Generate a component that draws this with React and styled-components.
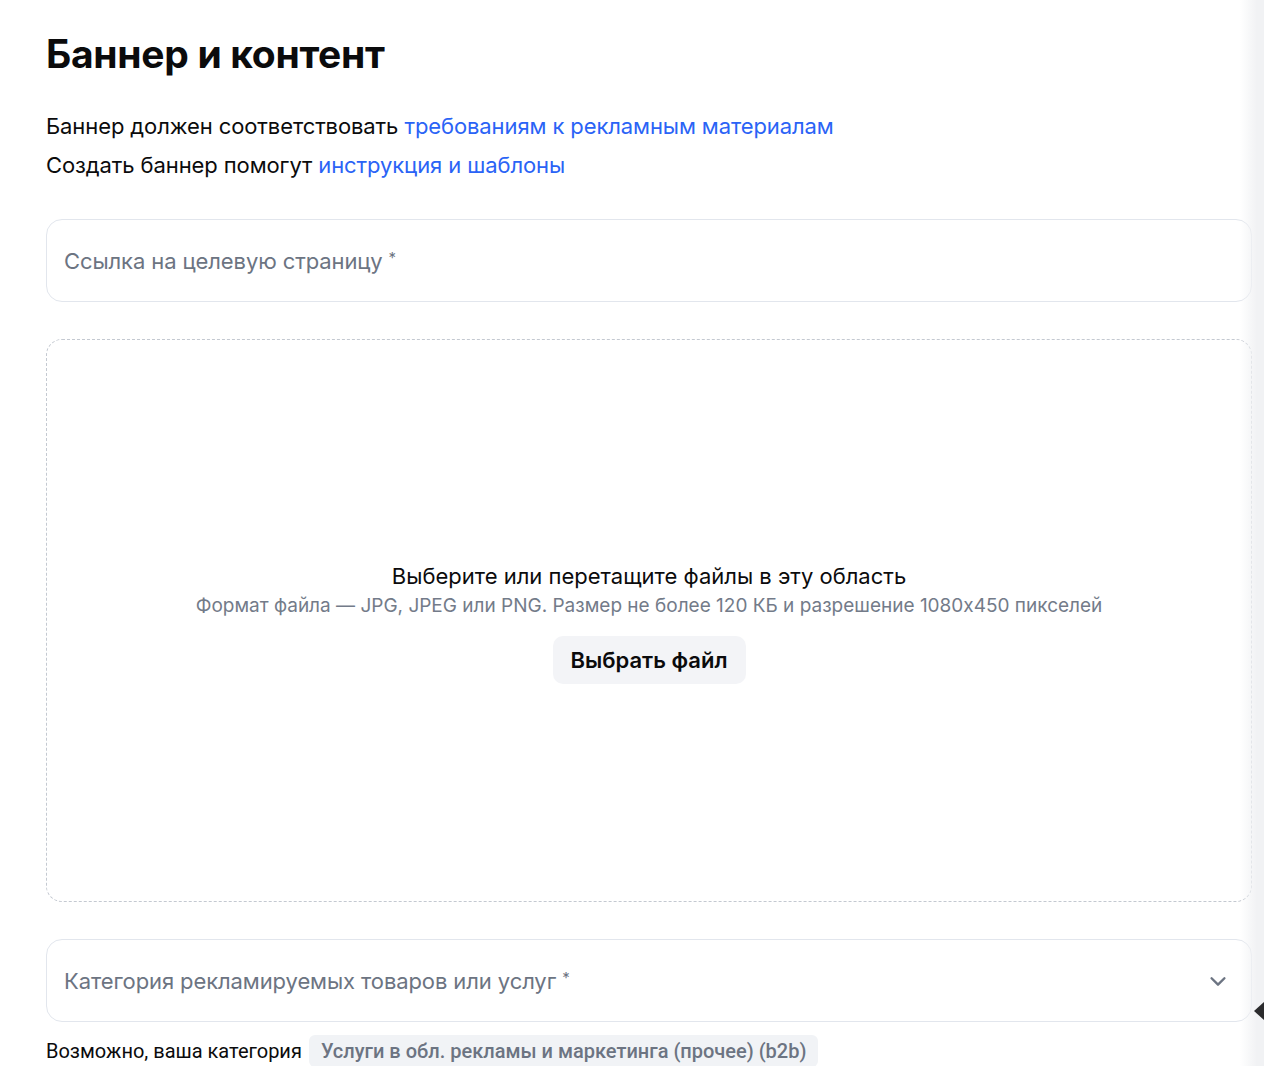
import styled, { createGlobalStyle } from "styled-components";

const GlobalStyle = createGlobalStyle`
  * { box-sizing: border-box; }
  body {
    margin: 0;
    background: #fff;
    font-family: Inter, "Noto Sans", sans-serif;
    color: #0b0b0c;
  }
`;

const Page = styled.div`
  position: relative;
  width: 1264px;
  height: 1066px;
  overflow: hidden;
  padding: 29px 12px 0 46px;
`;

const Title = styled.h1`
  margin: 0 0 28px;
  font-size: 39px;
  line-height: 50px;
  font-weight: 700;
  letter-spacing: -0.3px;
`;

const Note = styled.p`
  margin: 0;
  font-size: 22px;
  line-height: 39px;
  letter-spacing: -0.1px;
  a {
    color: #2a63f6;
    text-decoration: none;
  }
`;

const Field = styled.div`
  display: flex;
  align-items: center;
  justify-content: space-between;
  height: 83px;
  margin-top: ${(p) => p.$top}px;
  padding: 0 22px 0 17px;
  border: 1px solid #e2e6ed;
  border-radius: 16px;
  font-size: 22px;
  color: #6c7482;
  letter-spacing: -0.1px;
`;

const Required = styled.span`
  font-size: 15px;
  vertical-align: top;
  margin-left: 6px;
`;

const Dropzone = styled.div`
  display: flex;
  flex-direction: column;
  align-items: center;
  justify-content: center;
  height: 563px;
  margin-top: 37px;
  padding-top: 5px;
  border: 1px dashed #c4c9d1;
  border-radius: 16px;
  text-align: center;
`;

const DropTitle = styled.div`
  font-size: 22px;
  line-height: 28px;
  color: #0b0b0c;
`;

const DropHint = styled.div`
  margin-top: 3px;
  font-size: 19px;
  line-height: 26px;
  color: #737b89;
`;

const PickButton = styled.button`
  margin-top: 17px;
  height: 48px;
  padding: 0 18px;
  border: none;
  border-radius: 10px;
  background: #f3f4f7;
  font-family: inherit;
  font-size: 22px;
  font-weight: 600;
  color: #0b0b0c;
`;

const Hint = styled.div`
  display: flex;
  align-items: center;
  gap: 7px;
  margin-top: 13px;
  font-family: Roboto, sans-serif;
  font-size: 20px;
  color: #0b0b0c;
`;

const Chip = styled.span`
  display: inline-flex;
  align-items: center;
  height: 32px;
  padding: 0 12px;
  border-radius: 6px;
  background: #f1f3f6;
  font-weight: 500;
  color: #6c7482;
`;

const Shade = styled.div`
  position: absolute;
  top: 0;
  right: 0;
  width: 24px;
  height: 100%;
  background: linear-gradient(to right, rgba(243, 244, 246, 0), #f1f2f4 70%);
  pointer-events: none;
`;

const Pointer = styled.div`
  position: absolute;
  right: 0;
  top: 1002px;
  width: 0;
  height: 0;
  border-top: 9px solid transparent;
  border-bottom: 9px solid transparent;
  border-right: 10px solid #2b2b2d;
`;

const Chevron = () => (
  <svg width="22" height="22" viewBox="0 0 24 24" fill="none">
    <path d="M5 9l7 7 7-7" stroke="#6c7482" strokeWidth="2.6" strokeLinecap="round" strokeLinejoin="round" />
  </svg>
);

export default function App() {
  return (
    <Page>
      <GlobalStyle />
      <Title>Баннер и контент</Title>
      <Note>
        Баннер должен соответствовать <a href="#">требованиям к рекламным материалам</a>
      </Note>
      <Note>
        Создать баннер помогут <a href="#">инструкция и шаблоны</a>
      </Note>

      <Field $top={34}>
        <span>
          Ссылка на целевую страницу<Required>*</Required>
        </span>
      </Field>

      <Dropzone>
        <DropTitle>Выберите или перетащите файлы в эту область</DropTitle>
        <DropHint>
          Формат файла — JPG, JPEG или PNG. Размер не более 120 КБ и разрешение 1080x450 пикселей
        </DropHint>
        <PickButton>Выбрать файл</PickButton>
      </Dropzone>

      <Field $top={37}>
        <span>
          Категория рекламируемых товаров или услуг<Required>*</Required>
        </span>
        <Chevron />
      </Field>

      <Hint>
        Возможно, ваша категория
        <Chip>Услуги в обл. рекламы и маркетинга (прочее) (b2b)</Chip>
      </Hint>

      <Shade />
      <Pointer />
    </Page>
  );
}
